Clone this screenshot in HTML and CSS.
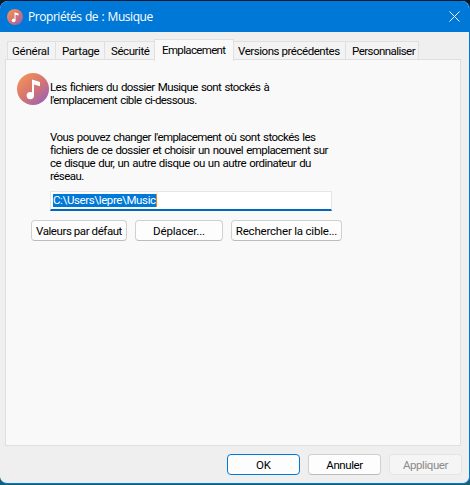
FILE: index.html
```html
<!DOCTYPE html>
<html lang="fr">
<head>
<meta charset="utf-8">
<title>Propriétés de : Musique</title>
<link rel="stylesheet" href="styles.css">
</head>
<body>
<svg class="defs" aria-hidden="true">
  <defs>
    <linearGradient id="disc" x1="0.1" y1="0.1" x2="0.85" y2="0.95">
      <stop offset="0" stop-color="#f1925a"/>
      <stop offset="0.5" stop-color="#d67570"/>
      <stop offset="1" stop-color="#9c62b4"/>
    </linearGradient>
    <symbol id="music" viewBox="0 0 32 32">
      <circle cx="16" cy="16" r="16" fill="url(#disc)"/>
      <circle cx="13.3" cy="22.6" r="3.7" fill="#fff"/>
      <path d="M15 6.5l8 2.4v4.3l-6-1.8v11.2h-2z" fill="#fff"/>
    </symbol>
  </defs>
</svg>
<div class="window">
  <header class="titlebar">
    <svg class="title-icon"><use href="#music"/></svg>
    <h1 class="title">Propriétés de : Musique</h1>
    <svg class="close" viewBox="0 0 11 11"><path d="M.5.5l10 10M10.5.5l-10 10"/></svg>
  </header>
  <nav class="tabs">
    <span class="tab general">Général</span>
    <span class="tab share">Partage</span>
    <span class="tab security">Sécurité</span>
    <span class="tab location active">Emplacement</span>
    <span class="tab versions">Versions précédentes</span>
    <span class="tab customize">Personnaliser</span>
  </nav>
  <main class="panel">
    <div class="intro">
      <svg class="folder-icon"><use href="#music"/></svg>
      <p class="text first">Les fichiers du dossier Musique sont stockés à<br>l'emplacement cible ci-dessous.</p>
    </div>
    <p class="text help">Vous pouvez changer l'emplacement où sont stockés les<br>fichiers de ce dossier et choisir un nouvel emplacement sur<br>ce disque dur, un autre disque ou un autre ordinateur du<br>réseau.</p>
    <div class="field"><span class="selection">C:\Users\lepre\Music</span></div>
    <div class="actions">
      <button class="btn defaults">Valeurs par défaut</button>
      <button class="btn move">Déplacer...</button>
      <button class="btn find">Rechercher la cible...</button>
    </div>
  </main>
  <footer class="footer">
    <button class="btn ok">OK</button>
    <button class="btn cancel">Annuler</button>
    <button class="btn apply" disabled>Appliquer</button>
  </footer>
</div>
</body>
</html>
```
FILE: styles.css
```css
* { box-sizing: border-box; }
body {
  margin: 0;
  width: 470px;
  height: 485px;
  padding-top: 1px;
  overflow: hidden;
  background: linear-gradient(#07192c 0, #07192c 50%, #17606f 50%);
  font: 11.5px/13px Roboto, "Liberation Sans", sans-serif;
  color: #000;
}
.defs { position: absolute; width: 0; height: 0; }
.window {
  display: flex;
  flex-direction: column;
  width: 470px;
  height: 483px;
  background: #efefef;
  border: solid #0078d4;
  border-width: 0 1px 1px 0;
  border-radius: 8px 8px 7px 7px;
  overflow: hidden;
}
.titlebar {
  display: flex;
  align-items: center;
  flex: none;
  height: 31px;
  margin-right: -1px;
  padding: 0 10px 0 7px;
  background: #0078d7;
  color: #fff;
}
.title-icon { width: 16px; height: 16px; margin-right: 5px; }
.title {
  flex: 1;
  margin: 0;
  font: 12px/16px "Open Sans", "Noto Sans", sans-serif;
  letter-spacing: -0.45px;
  word-spacing: 0.7px;
}
.close { width: 11px; height: 11px; fill: none; stroke: #fff; stroke-width: 1; }
.tabs { display: flex; align-items: flex-end; height: 28px; padding-left: 7px; flex: none; }
.tab {
  height: 19px;
  padding: 3px 0 0 6px;
  border: solid #e0e0e0;
  border-width: 1px 1px 0 0;
  background: #f3f3f3;
  white-space: nowrap;
  letter-spacing: -0.43px;
}
.general { width: 49px; padding-left: 4px; border-left-width: 1px; letter-spacing: -0.25px; }
.share { width: 49px; }
.security { width: 49px; border-right: 0; }
.location { width: 80px; letter-spacing: -0.65px; }
.versions { width: 112px; padding-left: 4px; letter-spacing: -0.45px; }
.customize { width: 73px; letter-spacing: -0.55px; }
.tab.active {
  height: 22px;
  margin-bottom: -1px;
  padding: 4px 0 0 7px;
  border-left-width: 1px;
  background: #f9f9f9;
  position: relative;
}
.panel {
  flex: none;
  width: 456px;
  height: 387px;
  margin: -1px 0 0 5px;
  padding: 13px 0 0 11px;
  border: 1px solid #dfdfdf;
  background: #f9f9f9;
}
.intro { display: flex; height: 34px; }
.folder-icon { flex: none; width: 32px; height: 32px; }
.text { margin: 0; white-space: nowrap; letter-spacing: -0.58px; word-spacing: 0.9px; }
.first { margin: 8px 0 0 1px; }
.help { margin: 24px 0 0 33px; letter-spacing: -0.56px; }
.field {
  width: 282px;
  height: 20px;
  margin: 8px 0 0 33px;
  padding: 2px 0 0 2px;
  background: #fff;
  border: 1px solid #e5e5e5;
  border-bottom: 2px solid #0067c0;
}
.selection {
  display: inline-block;
  background: #0078d7;
  color: #fff;
  border-right: 1px solid #f27f22;
  letter-spacing: -0.37px;
}
.actions { display: flex; gap: 8px; margin: 9px 0 0 14px; }
.btn {
  height: 21px;
  padding: 1px 0 0;
  border: 1px solid #d0d0d0;
  border-bottom-color: #bcbcbc;
  border-radius: 4px;
  background: #fdfdfd;
  color: #000;
  font: inherit;
  letter-spacing: -0.43px;
  white-space: nowrap;
}
.defaults { width: 96px; }
.move { width: 88px; letter-spacing: -0.15px; }
.find { width: 111px; letter-spacing: -0.2px; }
.footer { display: flex; gap: 8px; margin: 8px 0 0 227px; }
.footer .btn { width: 73px; }
.footer .ok { border-color: #0078d4; letter-spacing: -0.1px; }
.footer .apply { background: #f5f5f5; border-color: #e5e5e5; color: #8b8b8b; }
```
